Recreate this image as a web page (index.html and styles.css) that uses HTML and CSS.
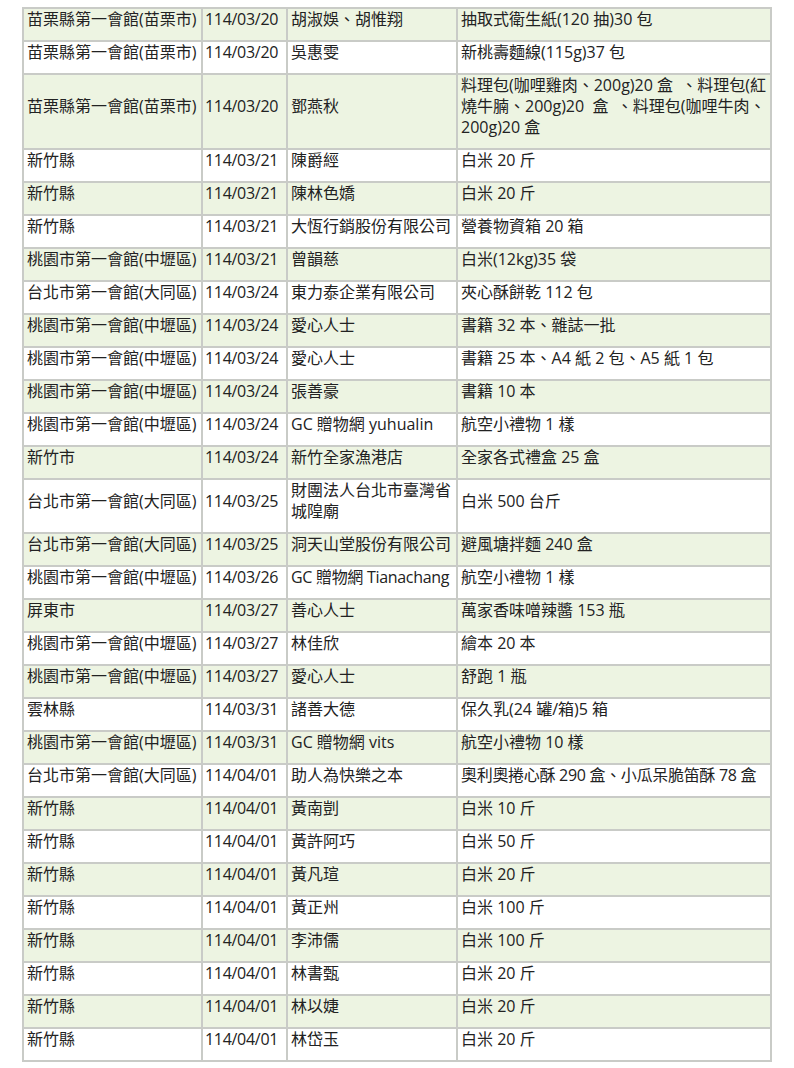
FILE: index.html
```html
<!DOCTYPE html>
<html lang="zh-Hant">
<head>
<meta charset="utf-8">
<title>物資捐贈明細</title>
<link rel="stylesheet" href="styles.css">
</head>
<body>
<table class="donations">
  <colgroup>
    <col class="c-place">
    <col class="c-date">
    <col class="c-donor">
    <col class="c-item">
  </colgroup>
  <tbody>
    <tr><td>苗栗縣第一會館(苗栗市)</td><td class="date">114/03/20</td><td>胡淑娛、胡惟翔</td><td>抽取式衛生紙(120 抽)30 包</td></tr>
    <tr><td>苗栗縣第一會館(苗栗市)</td><td class="date">114/03/20</td><td>吳惠雯</td><td>新桃壽麵線(115g)37 包</td></tr>
    <tr><td>苗栗縣第一會館(苗栗市)</td><td class="date">114/03/20</td><td>鄧燕秋</td><td>料理包(咖哩雞肉、200g)20 盒&nbsp; 、料理包(紅<br>燒牛腩、200g)20&nbsp; 盒&nbsp; 、料理包(咖哩牛肉、<br>200g)20 盒</td></tr>
    <tr><td>新竹縣</td><td class="date">114/03/21</td><td>陳爵經</td><td>白米 20 斤</td></tr>
    <tr><td>新竹縣</td><td class="date">114/03/21</td><td>陳林色嬌</td><td>白米 20 斤</td></tr>
    <tr><td>新竹縣</td><td class="date">114/03/21</td><td>大恆行銷股份有限公司</td><td>營養物資箱 20 箱</td></tr>
    <tr><td>桃園市第一會館(中壢區)</td><td class="date">114/03/21</td><td>曾韻慈</td><td>白米(12kg)35 袋</td></tr>
    <tr><td>台北市第一會館(大同區)</td><td class="date">114/03/24</td><td>東力泰企業有限公司</td><td>夾心酥餅乾 112 包</td></tr>
    <tr><td>桃園市第一會館(中壢區)</td><td class="date">114/03/24</td><td>愛心人士</td><td>書籍 32 本、雜誌一批</td></tr>
    <tr><td>桃園市第一會館(中壢區)</td><td class="date">114/03/24</td><td>愛心人士</td><td>書籍 25 本、A4 紙 2 包、A5 紙 1 包</td></tr>
    <tr><td>桃園市第一會館(中壢區)</td><td class="date">114/03/24</td><td>張善豪</td><td>書籍 10 本</td></tr>
    <tr><td>桃園市第一會館(中壢區)</td><td class="date">114/03/24</td><td>GC 贈物網 yuhualin</td><td>航空小禮物 1 樣</td></tr>
    <tr><td>新竹市</td><td class="date">114/03/24</td><td>新竹全家漁港店</td><td>全家各式禮盒 25 盒</td></tr>
    <tr><td>台北市第一會館(大同區)</td><td class="date">114/03/25</td><td>財團法人台北市臺灣省城隍廟</td><td>白米 500 台斤</td></tr>
    <tr><td>台北市第一會館(大同區)</td><td class="date">114/03/25</td><td>洞天山堂股份有限公司</td><td>避風塘拌麵 240 盒</td></tr>
    <tr><td>桃園市第一會館(中壢區)</td><td class="date">114/03/26</td><td class="nowrap">GC 贈物網 Tianachang</td><td>航空小禮物 1 樣</td></tr>
    <tr><td>屏東市</td><td class="date">114/03/27</td><td>善心人士</td><td>萬家香味噌辣醬 153 瓶</td></tr>
    <tr><td>桃園市第一會館(中壢區)</td><td class="date">114/03/27</td><td>林佳欣</td><td>繪本 20 本</td></tr>
    <tr><td>桃園市第一會館(中壢區)</td><td class="date">114/03/27</td><td>愛心人士</td><td>舒跑 1 瓶</td></tr>
    <tr><td>雲林縣</td><td class="date">114/03/31</td><td>諸善大德</td><td>保久乳(24 罐/箱)5 箱</td></tr>
    <tr><td>桃園市第一會館(中壢區)</td><td class="date">114/03/31</td><td>GC 贈物網 vits</td><td>航空小禮物 10 樣</td></tr>
    <tr><td>台北市第一會館(大同區)</td><td class="date">114/04/01</td><td>助人為快樂之本</td><td class="nowrap">奧利奧捲心酥 290 盒、小瓜呆脆笛酥 78 盒</td></tr>
    <tr><td>新竹縣</td><td class="date">114/04/01</td><td>黃南剴</td><td>白米 10 斤</td></tr>
    <tr><td>新竹縣</td><td class="date">114/04/01</td><td>黃許阿巧</td><td>白米 50 斤</td></tr>
    <tr><td>新竹縣</td><td class="date">114/04/01</td><td>黃凡瑄</td><td>白米 20 斤</td></tr>
    <tr><td>新竹縣</td><td class="date">114/04/01</td><td>黃正州</td><td>白米 100 斤</td></tr>
    <tr><td>新竹縣</td><td class="date">114/04/01</td><td>李沛儒</td><td>白米 100 斤</td></tr>
    <tr><td>新竹縣</td><td class="date">114/04/01</td><td>林書甄</td><td>白米 20 斤</td></tr>
    <tr><td>新竹縣</td><td class="date">114/04/01</td><td>林以婕</td><td>白米 20 斤</td></tr>
    <tr><td>新竹縣</td><td class="date">114/04/01</td><td>林岱玉</td><td>白米 20 斤</td></tr>
  </tbody>
</table>
</body>
</html>
```

FILE: styles.css
```css
html, body {
  margin: 0;
  padding: 0;
  background: #ffffff;
}

body {
  padding-top: 7px;
  font-family: "Open Sans", "Noto Sans CJK TC", sans-serif;
  font-size: 16px;
  color: #222222;
}

.donations {
  margin: 0 auto;
  width: 750px;
  table-layout: fixed;
  border-collapse: collapse;
  border: 2px solid #c9cbc7;
}

.c-place { width: 179px; }
.c-date { width: 85px; }
.c-donor { width: 170px; }
.c-item { width: 314px; }

.donations td {
  border: 2px solid #c9cbc7;
  padding: 0 3px 10px 3px;
  line-height: 21px;
  vertical-align: middle;
  text-align: left;
  white-space: normal;
}

.donations tr:nth-child(odd) td {
  background: #edf4e2;
}

.donations tr:nth-child(even) td {
  background: #ffffff;
}

.donations td.date {
  padding-left: 2px;
  letter-spacing: -0.3px;
}

.donations td.nowrap {
  white-space: nowrap;
  letter-spacing: -0.3px;
}
```
